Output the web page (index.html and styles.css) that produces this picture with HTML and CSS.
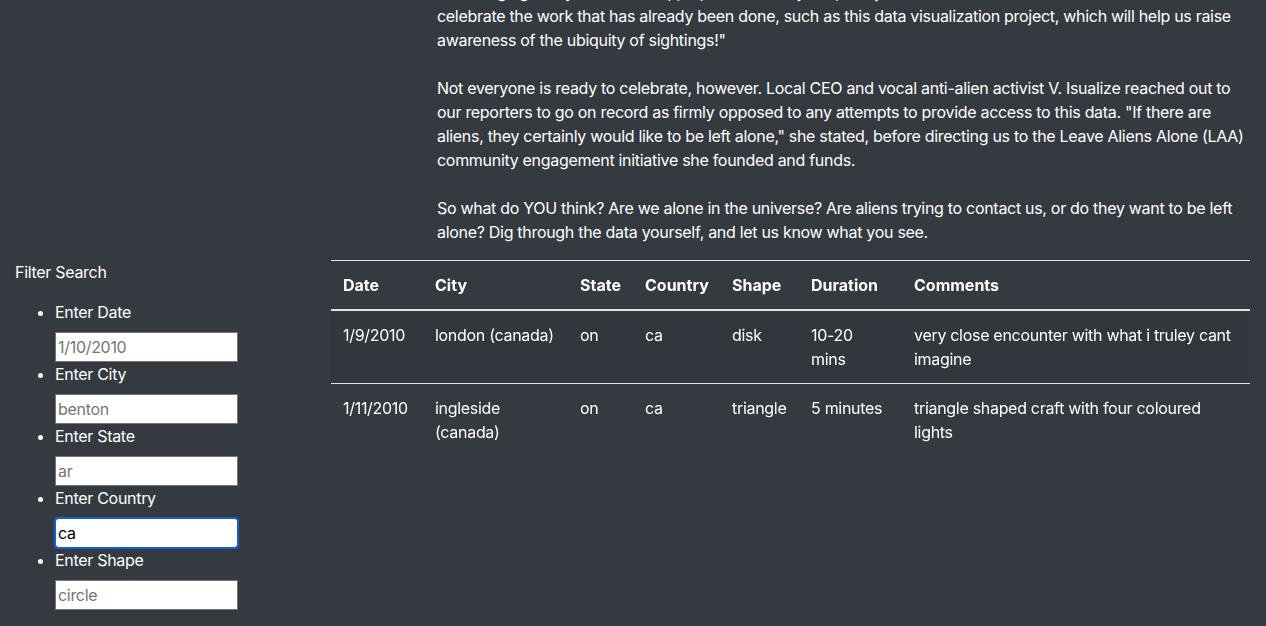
FILE: index.html
```html
<!DOCTYPE html>
<html lang="en">
<head>
<meta charset="utf-8">
<title>UFO Sightings</title>
<link rel="stylesheet" href="styles.css">
</head>
<body>
<div class="page">
  <section class="article-row">
    <div class="article-aside"></div>
    <article class="article">
      <h2 class="article-title">The Truth Is Out There</h2>
      <p class="article-para">Are we alone in the universe? For decades, ufologists have gathered reports of strange lights and unexplained crafts drifting across the night sky, and now those reports are finally available for anyone to explore. "We are encouraging everyone to look up, report what they see, and join us as we<br>celebrate the work that has already been done, such as this data visualization project, which will help us raise<br>awareness of the ubiquity of sightings!"</p>
      <p class="article-para" id="anchor-para">Not everyone is ready to celebrate, however. Local CEO and vocal anti-alien activist V. Isualize reached out to<br>our reporters to go on record as firmly opposed to any attempts to provide access to this data. "If there are<br>aliens, they certainly would like to be left alone," she stated, before directing us to the Leave Aliens Alone (LAA)<br>community engagement initiative she founded and funds.</p>
      <p class="article-para article-para-last">So what do YOU think? Are we alone in the universe? Are aliens trying to contact us, or do they want to be left<br>alone? Dig through the data yourself, and let us know what you see.</p>
    </article>
  </section>
  <section class="data-row">
    <aside class="filters">
      <p class="filters-title">Filter Search</p>
      <ul class="filter-list">
        <li class="filter-item">
          <label class="filter-label" for="datetime">Enter Date</label>
          <input class="filter-input" id="datetime" type="text" placeholder="1/10/2010">
        </li>
        <li class="filter-item">
          <label class="filter-label" for="city">Enter City</label>
          <input class="filter-input" id="city" type="text" placeholder="benton">
        </li>
        <li class="filter-item">
          <label class="filter-label" for="state">Enter State</label>
          <input class="filter-input" id="state" type="text" placeholder="ar">
        </li>
        <li class="filter-item">
          <label class="filter-label" for="country">Enter Country</label>
          <input class="filter-input is-focused" id="country" type="text" placeholder="us" value="ca">
        </li>
        <li class="filter-item">
          <label class="filter-label" for="shape">Enter Shape</label>
          <input class="filter-input" id="shape" type="text" placeholder="circle">
        </li>
      </ul>
    </aside>
    <div class="results">
      <table class="ufo-table">
        <colgroup>
          <col class="col-date">
          <col class="col-city">
          <col class="col-state">
          <col class="col-country">
          <col class="col-shape">
          <col class="col-duration">
          <col class="col-comments">
        </colgroup>
        <thead>
          <tr>
            <th>Date</th>
            <th>City</th>
            <th>State</th>
            <th>Country</th>
            <th>Shape</th>
            <th>Duration</th>
            <th>Comments</th>
          </tr>
        </thead>
        <tbody>
          <tr class="row-odd">
            <td>1/9/2010</td>
            <td>london (canada)</td>
            <td>on</td>
            <td>ca</td>
            <td>disk</td>
            <td>10-20 mins</td>
            <td>very close encounter with what i truley cant imagine</td>
          </tr>
          <tr>
            <td>1/11/2010</td>
            <td>ingleside (canada)</td>
            <td>on</td>
            <td>ca</td>
            <td>triangle</td>
            <td>5 minutes</td>
            <td>triangle shaped craft with four coloured lights</td>
          </tr>
        </tbody>
      </table>
    </div>
  </section>
</div>
<script src="script.js"></script>
</body>
</html>
```

FILE: styles.css
```css
html, body {
  margin: 0;
  padding: 0;
  background: #343a40;
}

body {
  color: #ffffff;
  font-family: Inter, "Noto Sans", "Liberation Sans", sans-serif;
  font-size: 16px;
  line-height: 24px;
  letter-spacing: -0.3px;
}

.page {
  padding-top: 40px;
  padding-bottom: 24px;
}

.article-row {
  display: flex;
}

.article-aside {
  flex: 0 0 422px;
}

.article {
  flex: 1 1 auto;
  min-width: 0;
  box-sizing: border-box;
  padding: 0 15px;
}

.article-title {
  margin: 0 0 24px;
  font-size: 28px;
  line-height: 34px;
  font-weight: 500;
}

.article-para {
  margin: 0 0 24px;
}

.article-para-last {
  margin-bottom: 16px;
}

.data-row {
  display: flex;
  align-items: flex-start;
}

.filters {
  flex: 0 0 316px;
  box-sizing: border-box;
  padding: 0 15px;
}

.filters-title {
  margin: 0 0 16px;
}

.filter-list {
  margin: 0 0 16px;
  padding-left: 40px;
}

.filter-label {
  display: block;
  margin-bottom: 8px;
}

.filter-input {
  display: block;
  box-sizing: border-box;
  width: 183px;
  height: 30px;
  margin: 0;
  padding: 1px 2px;
  border: 1px solid #767676;
  border-radius: 0;
  background: #ffffff;
  color: #000000;
  font-family: inherit;
  font-size: 16px;
  line-height: 24px;
  letter-spacing: inherit;
  outline: none;
}

.filter-input::placeholder {
  color: #757575;
  opacity: 1;
}

.filter-input.is-focused,
.filter-input:focus {
  border-radius: 3px;
  border-color: #1460d2;
  outline: 2px solid #1460d2;
  outline-offset: -1px;
}

.results {
  flex: 1 1 auto;
  box-sizing: border-box;
  padding: 0 16px 0 15px;
}

.ufo-table {
  width: 100%;
  table-layout: fixed;
  border-collapse: collapse;
  color: #ffffff;
}

.col-date { width: 92px; }
.col-city { width: 145px; }
.col-state { width: 65px; }
.col-country { width: 87px; }
.col-shape { width: 79px; }
.col-duration { width: 103px; }
.col-comments { width: auto; }

.ufo-table th,
.ufo-table td {
  padding: 12px;
  text-align: left;
  vertical-align: top;
  border-top: 1px solid #dee2e6;
}

.ufo-table th {
  font-weight: 700;
  letter-spacing: 0;
  border-bottom: 2px solid #dee2e6;
}

.ufo-table thead + tbody tr:first-child td {
  border-top: 0;
}

.row-odd {
  background: rgba(0, 0, 0, 0.05);
}
```

FILE: script.js
```js
(function () {
  var input = document.getElementById('country');
  if (input) {
    input.focus({ preventScroll: true });
    input.setSelectionRange(2, 2);
  }
  var anchor = document.getElementById('anchor-para');
  if (anchor) {
    var top = anchor.getBoundingClientRect().top + window.pageYOffset;
    window.scrollTo(0, top - 76);
  }
})();
```
